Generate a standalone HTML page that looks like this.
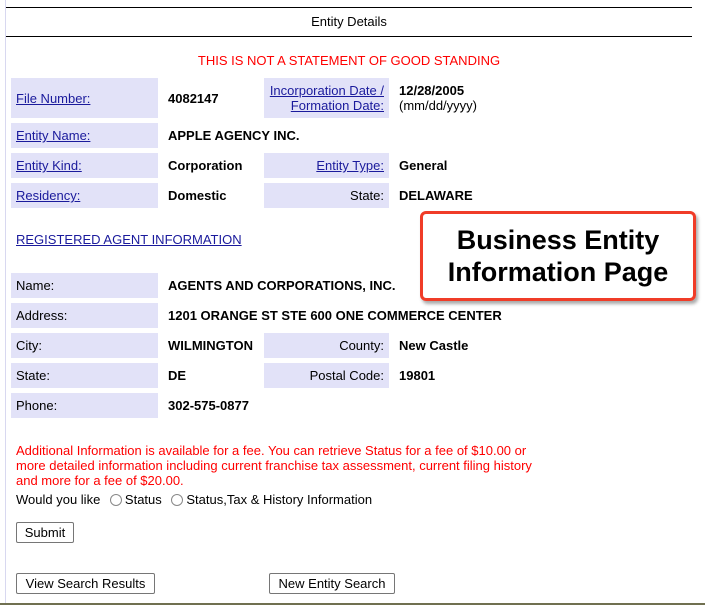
<!DOCTYPE html>
<html><head><meta charset="utf-8"><style>
body{margin:0;width:705px;height:605px;background:#fff;position:relative;overflow:hidden;font-family:"Liberation Sans",Arial,sans-serif;font-size:13px;color:#000}
.a{position:absolute}
.l{position:absolute;background:#e2e2f8;box-sizing:border-box;padding:0 5px;display:flex;align-items:center}
.r{justify-content:flex-end}
.l a,.u{color:#1a1a9c;text-decoration:underline}
.v{position:absolute;font-weight:bold;display:flex;align-items:center}
.btn{position:absolute;border:1px solid #767676;border-radius:2px;background:#fff;font-size:13px;box-sizing:border-box;text-align:center;line-height:19px;height:21px}
.rad{display:inline-block;width:12px;height:12px;border:1px solid #888;border-radius:50%;vertical-align:-2px;margin:0 3px 0 6px;box-sizing:border-box}
</style></head><body>
<div class="a" style="left:5px;top:0;width:1px;height:605px;background:#d8d8f0"></div>
<div class="a" style="left:6px;top:7px;width:686px;height:1px;background:#000"></div>
<div class="a" style="left:6px;top:36px;width:686px;height:1px;background:#000"></div>
<div class="a" style="left:0;top:603px;width:705px;height:2px;background:#707050"></div>
<div class="a" style="left:6px;top:14px;width:686px;text-align:center">Entity Details</div>
<div class="a" style="left:6px;top:53px;width:686px;text-align:center;color:#f00;font-size:13px">THIS IS NOT A STATEMENT OF GOOD STANDING</div>

<div class="l" style="left:11px;top:78px;width:147px;height:40px"><a>File Number:</a></div>
<div class="v" style="left:168px;top:78px;height:40px">4082147</div>
<div class="l r" style="left:264px;top:78px;width:125px;height:40px;text-align:right"><a>Incorporation Date /<br>Formation Date:</a></div>
<div class="a" style="left:399px;top:83px;line-height:15px"><b>12/28/2005</b><br>(mm/dd/yyyy)</div>

<div class="l" style="left:11px;top:123px;width:147px;height:25px"><a>Entity Name:</a></div>
<div class="v" style="left:168px;top:123px;height:25px">APPLE AGENCY INC.</div>
<div class="l" style="left:11px;top:153px;width:147px;height:25px"><a>Entity Kind:</a></div>
<div class="v" style="left:168px;top:153px;height:25px">Corporation</div>
<div class="l r" style="left:264px;top:153px;width:125px;height:25px"><a>Entity Type:</a></div>
<div class="v" style="left:399px;top:153px;height:25px">General</div>
<div class="l" style="left:11px;top:183px;width:147px;height:25px"><a>Residency:</a></div>
<div class="v" style="left:168px;top:183px;height:25px">Domestic</div>
<div class="l r" style="left:264px;top:183px;width:125px;height:25px">State:</div>
<div class="v" style="left:399px;top:183px;height:25px">DELAWARE</div>

<div class="a u" style="left:16px;top:232px;font-size:13px">REGISTERED AGENT INFORMATION</div>

<div class="l" style="left:11px;top:273px;width:147px;height:25px">Name:</div>
<div class="v" style="left:168px;top:273px;height:25px">AGENTS AND CORPORATIONS, INC.</div>
<div class="l" style="left:11px;top:303px;width:147px;height:25px">Address:</div>
<div class="v" style="left:168px;top:303px;height:25px">1201 ORANGE ST STE 600 ONE COMMERCE CENTER</div>
<div class="l" style="left:11px;top:333px;width:147px;height:25px">City:</div>
<div class="v" style="left:168px;top:333px;height:25px">WILMINGTON</div>
<div class="l r" style="left:264px;top:333px;width:125px;height:25px">County:</div>
<div class="v" style="left:399px;top:333px;height:25px">New Castle</div>
<div class="l" style="left:11px;top:363px;width:147px;height:25px">State:</div>
<div class="v" style="left:168px;top:363px;height:25px">DE</div>
<div class="l r" style="left:264px;top:363px;width:125px;height:25px">Postal Code:</div>
<div class="v" style="left:399px;top:363px;height:25px">19801</div>
<div class="l" style="left:11px;top:393px;width:147px;height:25px">Phone:</div>
<div class="v" style="left:168px;top:393px;height:25px">302-575-0877</div>

<div class="a" style="left:420px;top:211px;width:276px;height:90px;border:3px solid #f03c28;border-radius:6px;box-sizing:border-box;box-shadow:2px 3px 3px #aaa;text-align:center;font-weight:bold;font-size:27px;line-height:32px;padding-top:10px">Business Entity<br>Information Page</div>

<div class="a" style="left:16px;top:443px;color:#f00;line-height:15px;width:528px">Additional Information is available for a fee. You can retrieve Status for a fee of $10.00 or more detailed information including current franchise tax assessment, current filing history and more for a fee of $20.00.</div>
<div class="a" style="left:16px;top:492px">Would you like <span class="rad" style="margin-left:6px"></span>Status <span class="rad" style="margin-left:6px"></span>Status,Tax &amp; History Information</div>
<div class="btn" style="left:16px;top:522px;width:58px">Submit</div>
<div class="btn" style="left:16px;top:573px;width:139px">View Search Results</div>
<div class="btn" style="left:269px;top:573px;width:126px">New Entity Search</div>
</body></html>
